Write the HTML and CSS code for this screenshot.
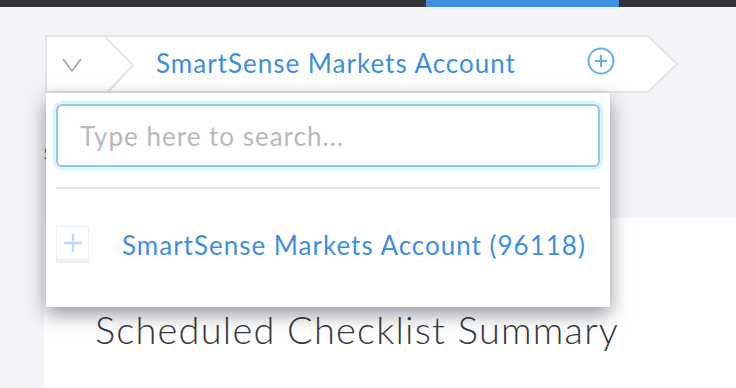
FILE: index.html
```html
<!DOCTYPE html>
<html lang="en">
<head>
<meta charset="utf-8">
<title>Checklist</title>
<link rel="stylesheet" href="styles.css">
</head>
<body>
<header class="topbar"><div class="topbar-active"></div></header>
<main class="page">
  <nav class="crumbs">
    <div class="crumbs-body">
      <div class="crumb-toggle">
        <svg width="22" height="16" viewBox="0 0 22 16"><polyline points="2,2 11,14 20,2" fill="none" stroke="#a3a3a6" stroke-width="1.6"/></svg>
      </div>
      <svg class="crumb-sep" width="30" height="58" viewBox="0 0 30 58"><polyline points="0,2 28,30 2,58" fill="none" stroke="#e3e4e8" stroke-width="2"/></svg>
      <div class="crumb-title">SmartSense Markets Account</div>
      <svg class="crumb-add" width="28" height="28" viewBox="0 0 28 28"><circle cx="14" cy="14" r="12.5" fill="none" stroke="#5fb0f2" stroke-width="2"/><path d="M14 8v12M8 14h12" stroke="#5fb0f2" stroke-width="2"/></svg>
    </div>
    <svg class="crumb-end" width="32" height="58" viewBox="0 0 32 58"><polygon points="0,1 1,1 30,29 1,57 0,57" fill="#fff"/><polyline points="0,1 1,1 30,29 1,57 0,57" fill="none" stroke="#e3e4e8" stroke-width="2"/></svg>
  </nav>
  <div class="label">Sites</div>
  <section class="card">
    <h1 class="card-title">Scheduled Checklist Summary</h1>
  </section>
  <div class="dropdown">
    <div class="search"><span class="search-placeholder">Type here to search...</span></div>
    <hr class="divider">
    <div class="option">
      <div class="option-expand">
        <svg width="20" height="20" viewBox="0 0 20 20"><path d="M10 1v18M1 10h18" stroke="#bcd9f4" stroke-width="2.4"/></svg>
      </div>
      <div class="option-text">SmartSense Markets Account (96118)</div>
    </div>
  </div>
</main>
</body>
</html>
```
FILE: styles.css
```css
* { box-sizing: border-box; }
html, body { margin: 0; padding: 0; }
body {
  background: #f3f4f8;
  font-family: Lato, "Open Sans", sans-serif;
  width: 736px;
  height: 388px;
  overflow: hidden;
}
.topbar {
  height: 7px;
  background: #343338;
  display: flex;
}
.topbar-active {
  margin-left: 426px;
  width: 193px;
  background: #3e90de;
}
.page {
  position: relative;
  padding-top: 28px;
}
.crumbs {
  display: flex;
  margin-left: 45px;
  height: 58px;
}
.crumbs-body {
  width: 602px;
  background: #fff;
  border: 2px solid #e3e4e8;
  border-right: none;
  display: flex;
  align-items: center;
}
.crumb-toggle {
  width: 58px;
  display: flex;
  justify-content: center;
  padding-right: 8px;
  padding-top: 2px;
}
.crumb-sep { margin-top: -2px; margin-bottom: -2px; }
.crumb-title {
  margin-left: 21px;
  color: #3e8fdf;
  font-size: 26px;
  letter-spacing: 1px;
  flex: 1;
  padding-bottom: 2px;
}
.crumb-add { margin-right: 32px; margin-top: -6px; }
.crumb-end { flex: none; }
.label {
  margin-left: 44px;
  margin-top: 50px;
  font-size: 17px;
  color: #333;
  height: 75px;
}
.card {
  margin-left: 44px;
  background: #fff;
  height: 170px;
  padding-top: 88px;
  padding-left: 51px;
}
.card-title {
  margin: 0;
  font-weight: 300;
  font-size: 38px;
  letter-spacing: 1.2px;
  color: #38383c;
}
.dropdown {
  position: absolute;
  left: 46px;
  top: 86px;
  width: 564px;
  height: 214px;
  background: #fff;
  box-shadow: 0 7px 18px rgba(40, 45, 60, 0.5);
  padding: 11px 10px 0 10px;
}
.search {
  height: 63px;
  border: 2px solid #86c9f7;
  border-radius: 6px;
  box-shadow: 0 0 0 3px #e0f0fc;
  display: flex;
  align-items: center;
  padding-left: 22px;
}
.search-placeholder {
  color: #b9b9bb;
  font-size: 26px;
  letter-spacing: 1px;
}
.divider {
  margin: 20px 0 0 0;
  border: none;
  height: 2px;
  background: #e1e3e6;
}
.option {
  display: flex;
  align-items: center;
  margin-top: 37px;
}
.option-expand {
  width: 33px;
  height: 37px;
  border: 1px solid #ebecef;
  border-bottom: 4px solid #eeeff2;
  display: flex;
  align-items: center;
  justify-content: center;
}
.option-text {
  margin-left: 33px;
  color: #3e8fdf;
  font-size: 26px;
  letter-spacing: 1px;
}
```
